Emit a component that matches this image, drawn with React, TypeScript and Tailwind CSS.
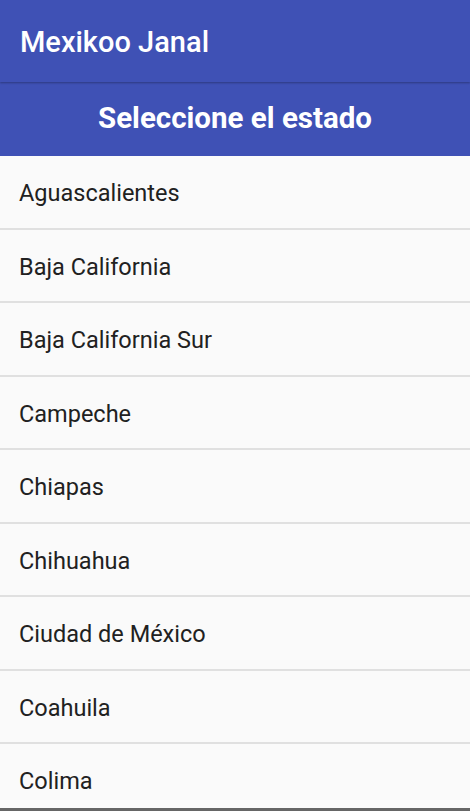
import React from "react";

const estados = [
  "Aguascalientes",
  "Baja California",
  "Baja California Sur",
  "Campeche",
  "Chiapas",
  "Chihuahua",
  "Ciudad de México",
  "Coahuila",
  "Colima",
];

export default function App() {
  return (
    <div className="w-[470px] h-[811px] overflow-hidden flex flex-col bg-[#fafafa] font-['Roboto',sans-serif]">
      <div className="h-[82px] shrink-0 bg-[#3f51b5] flex items-center px-5 pt-[2px] shadow-[0_1px_2px_rgba(0,0,0,0.3)] relative z-10">
        <h1 className="text-white text-[29px] font-medium leading-none">Mexikoo Janal</h1>
      </div>
      <div className="h-[74px] shrink-0 bg-[#3f51b5] flex items-center justify-center">
        <h2 className="text-white text-[29.5px] font-bold leading-none">Seleccione el estado</h2>
      </div>
      <ul className="flex-1 overflow-hidden">
        {estados.map((estado, index) => (
          <li
            key={index}
            className="h-[73.5px] flex items-center px-[19px] pt-[4px] border-b-2 border-[#e0e0e0] text-[23.5px] text-[#212121] leading-none"
          >
            {estado}
          </li>
        ))}
      </ul>
      <div className="h-[3px] shrink-0 bg-[#666]" />
    </div>
  );
}
